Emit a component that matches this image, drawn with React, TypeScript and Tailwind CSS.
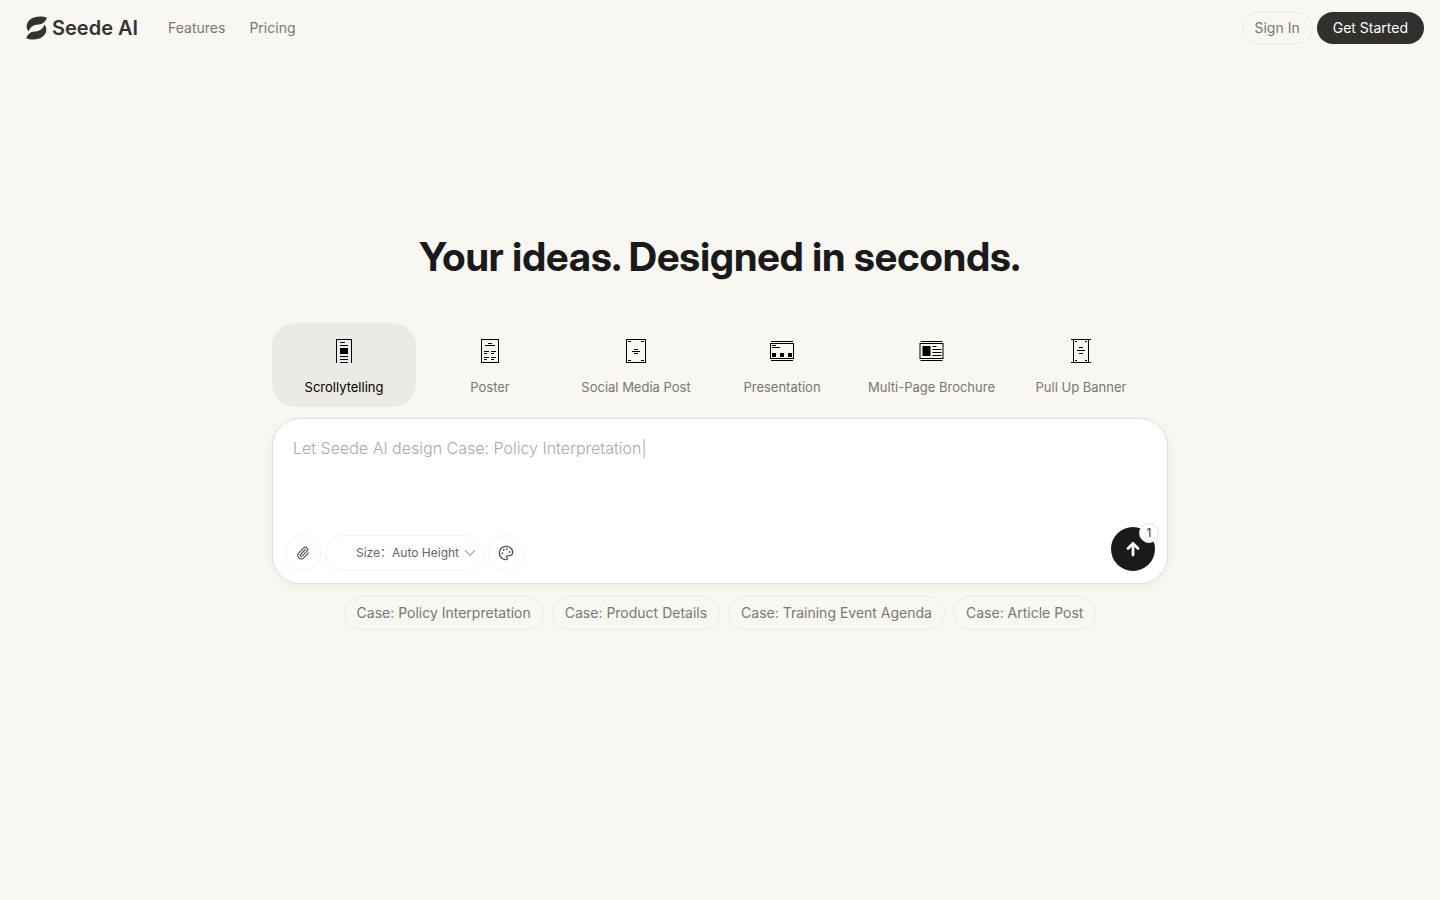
import React from "react";
import { ChevronDown, Palette, Paperclip } from "lucide-react";

interface Category {
  label: string;
  path: string;
}

// Icons are drawn on a 24px grid with filled bars
const categories: Category[] = [
  {
    label: "Scrollytelling",
    path: "M4 0h16v24h-1V1H5v23H4zM8 3h5v1H8zM8 6h8v1H8zM8 9h8v6H8zM8 17h8v1H8zM8 20h8v1H8zM8 23h8v1H8z",
  },
  {
    label: "Poster",
    path: "M3 0h18v1H3zM3 23h18v1H3zM3 1h1v22H3zM20 1h1v22h-1zM10 4h4v1h-4zM7 6h10v1H7zM6 12h5v1H6zM13 12h5v1h-5zM6 14h3v1H6zM13 14h3v1h-3zM6 18h5v1H6zM13 18h5v1h-5zM6 20h3v1H6zM13 20h3v1h-3z",
  },
  {
    label: "Social Media Post",
    path: "M2 0h20v1H2zM2 23h20v1H2zM2 1h1v22H2zM21 1h1v22h-1zM4 2h3v1H4zM17 2h3v1h-3zM4 21h3v1H4zM17 21h3v1h-3zM10 10h4v1h-4zM8 12h8v1H8zM10 14h4v1h-4z",
  },
  {
    label: "Presentation",
    path: "M1 2h22v1H1zM1 21h22v1H1zM0 4h24v1H0zM0 19h24v1H0zM0 5h1v14H0zM23 5h1v14h-1zM2 6h4v1H2zM2 8h8v1H2zM2 14h4v4H2zM10 14h4v4h-4zM18 14h4v4h-4z",
  },
  {
    label: "Multi-Page Brochure",
    path: "M.5 2h22v1H.5zM.5 21h22v1H.5zM-.5 4h24v1H-.5zM-.5 19h24v1H-.5zM-.5 5h1v14H-.5zM22.500 5h1v14h-1zM2.500 7h8v10h-8zM12.500 7h4v1h-4zM12.500 10h9v1h-9zM12.500 13h9v1h-9zM12.500 16h9v1h-9z",
  },
  {
    label: "Pull Up Banner",
    path: "M2 0h20v1H2zM2 23h20v1H2zM4 1h1v22H4zM19 1h1v22h-1zM6 2h2v1H6zM16 2h2v1h-2zM6 21h2v1H6zM16 21h2v1h-2zM10 8h4v1h-4zM8 11h8v1H8zM10 14h4v1h-4z",
  },
];

const cases = [
  "Case: Policy Interpretation",
  "Case: Product Details",
  "Case: Training Event Agenda",
  "Case: Article Post",
];

const Header = () => {
  return (
    <header className="flex h-14 items-center justify-between pl-6 pr-4">
      <div className="flex items-center">
        <a href="#" className="flex items-center gap-1 text-[#333331]">
          <svg viewBox="0 0 24 24" className="size-6" fill="currentColor">
            <path d="M23 1.8C18.5-.2 10.500 0 6.500 3.200C3.200 5.900 1.800 9.500 3.200 13.200C3.600 14.100 4.200 14.800 5 15.300C5.500 11.500 9.500 8.600 14.500 8.500C18.800 8.400 21.400 5.600 23 1.800Z" />
            <path d="M2.200 22.200C6.700 24.200 14.500 24 18.500 20.800C21.800 18.100 23.200 14.500 21.800 10.800C21.400 9.900 20.800 9.200 20 8.700C19.500 12.500 15.500 15.400 10.500 15.500C6.200 15.600 3.800 18.400 2.200 22.200Z" />
          </svg>
          <span className="text-xl font-semibold">Seede AI</span>
        </a>
        <nav className="ml-[30px] flex gap-6 text-sm text-[#777775]">
          <a href="#features">Features</a>
          <a href="#pricing">Pricing</a>
        </nav>
      </div>
      <div className="flex items-center gap-1 text-sm">
        <button className="h-8 rounded-full border border-[#ebeae5] px-3 text-[#777775]">
          Sign In
        </button>
        <button className="h-8 rounded-full bg-[#31302f] px-4 text-white">
          Get Started
        </button>
      </div>
    </header>
  );
};

const CategoryTabs = () => {
  return (
    <div className="flex gap-0.5">
      {categories.map((category, index) => (
        <button
          key={category.label}
          className={`flex h-[84px] min-w-36 flex-col items-center rounded-3xl px-3 pt-4 text-[13px] ${
            index === 0 ? "bg-[#ebeae5] text-black" : "text-[#777775]"
          }`}
        >
          <svg viewBox="0 0 24 24" className="size-6 overflow-visible" fill="black">
            <path d={category.path} />
          </svg>
          <span className="mt-[14px] leading-5">{category.label}</span>
        </button>
      ))}
    </div>
  );
};

const PromptBox = () => {
  return (
    <div className="mt-[11px] rounded-[28px] border border-[#e0dfda] bg-white p-3 shadow-[0_2px_8px_rgba(0,0,0,0.06)]">
      <textarea
        aria-label="Describe your design"
        placeholder="Let Seede AI design Case: Policy Interpretation|"
        className="block h-[104px] w-full resize-none px-2 pt-[5px] text-base font-light leading-6 text-[#1a1a1a] outline-none placeholder:text-[#aaaaaa]"
      />
      <div className="flex items-end justify-between">
        <div className="flex gap-1 text-[#555555]">
          <button
            aria-label="Attach file"
            className="flex size-9 items-center justify-center rounded-full border border-[#f5f5f5]"
          >
            <Paperclip size={14} />
          </button>
          <div className="relative flex h-9 items-center rounded-full border border-[#f5f5f5] pl-[30px] text-xs text-[#666666]">
            <label htmlFor="size">Size：</label>
            <select
              id="size"
              className="h-8 w-[91px] appearance-none bg-transparent outline-none"
            >
              <option>Auto Height</option>
            </select>
            <ChevronDown
              size={18}
              strokeWidth={1.5}
              className="pointer-events-none absolute right-1 text-[#aaaaaa]"
            />
          </div>
          <button
            aria-label="Choose palette"
            className="flex size-9 items-center justify-center rounded-full border border-[#f5f5f5]"
          >
            <Palette size={16} />
          </button>
        </div>
        <button
          aria-label="Generate"
          className="relative -mt-2 flex size-11 items-center justify-center rounded-full bg-[#1a1a1a] text-white"
        >
          <svg
            viewBox="0 0 16 16"
            className="size-4"
            fill="none"
            stroke="currentColor"
            strokeWidth={2.8}
            strokeLinecap="round"
            strokeLinejoin="round"
          >
            <path d="M8 14V2.500M3 7.500l5-5 5 5" />
          </svg>
          <span className="absolute -right-1 -top-1 flex size-5 items-center justify-center rounded-full border border-[#e5e5e5] bg-white text-xs text-[#333333]">
            1
          </span>
        </button>
      </div>
    </div>
  );
};

const App = () => {
  return (
    <div className="min-h-screen bg-[#f8f7f2] font-['Inter','Noto_Sans_CJK_SC',sans-serif]">
      <Header />
      <main className="mx-auto max-w-4xl pt-[177px]">
        <h1 className="mb-[42px] text-center font-['Inter_Display','Inter',sans-serif] text-[40px] font-bold leading-12 text-[#1a1a1a]">
          Your ideas. Designed in seconds.
        </h1>
        <CategoryTabs />
        <PromptBox />
        <div className="mt-3 flex justify-center gap-2">
          {cases.map((item) => (
            <button
              key={item}
              className="h-[34px] rounded-full border border-[#ebeae5] px-3 text-sm text-[#777775]"
            >
              {item}
            </button>
          ))}
        </div>
      </main>
    </div>
  );
};

export default App;
